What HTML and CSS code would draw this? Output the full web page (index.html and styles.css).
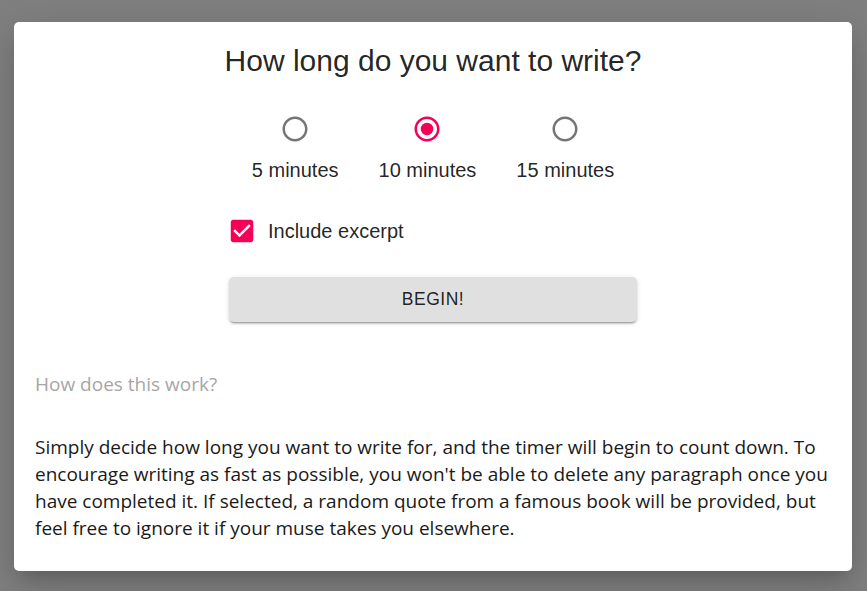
FILE: index.html
```html
<!DOCTYPE html>
<html>
<head>
<meta charset="utf-8">
<link rel="stylesheet" href="styles.css">
</head>
<body>
<div class="backdrop">
  <div class="dialog">
    <h2 class="title">How long do you want to write?</h2>
    <div class="radios">
      <label class="radio-item">
        <span class="radio-btn">
          <svg viewBox="0 0 24 24" width="30" height="30"><path fill="#757575" d="M12 2C6.48 2 2 6.48 2 12s4.48 10 10 10 10-4.48 10-10S17.52 2 12 2zm0 18c-4.42 0-8-3.58-8-8s3.58-8 8-8 8 3.58 8 8-3.58 8-8 8z"/></svg>
        </span>
        <span class="radio-label">5 minutes</span>
      </label>
      <label class="radio-item">
        <span class="radio-btn">
          <svg viewBox="0 0 24 24" width="30" height="30"><path fill="#f50057" d="M12 2C6.48 2 2 6.48 2 12s4.48 10 10 10 10-4.48 10-10S17.52 2 12 2zm0 18c-4.42 0-8-3.58-8-8s3.58-8 8-8 8 3.58 8 8-3.58 8-8 8z"/><circle cx="12" cy="12" r="5" fill="#f50057"/></svg>
        </span>
        <span class="radio-label">10 minutes</span>
      </label>
      <label class="radio-item">
        <span class="radio-btn">
          <svg viewBox="0 0 24 24" width="30" height="30"><path fill="#757575" d="M12 2C6.48 2 2 6.48 2 12s4.48 10 10 10 10-4.48 10-10S17.52 2 12 2zm0 18c-4.42 0-8-3.58-8-8s3.58-8 8-8 8 3.58 8 8-3.58 8-8 8z"/></svg>
        </span>
        <span class="radio-label">15 minutes</span>
      </label>
    </div>
    <div class="controls">
      <label class="check-row">
        <span class="check-btn">
          <svg viewBox="0 0 24 24" width="30" height="30"><path fill="#f50057" d="M19 3H5c-1.11 0-2 .9-2 2v14c0 1.1.89 2 2 2h14c1.11 0 2-.9 2-2V5c0-1.1-.89-2-2-2zm-9 14l-5-5 1.41-1.41L10 14.17l7.59-7.59L19 8l-9 9z"/></svg>
        </span>
        <span class="check-label">Include excerpt</span>
      </label>
      <button class="begin">BEGIN!</button>
    </div>
    <div class="info">
      <p class="info-head">How does this work?</p>
      <p class="info-text">Simply decide how long you want to write for, and the timer will begin to count down. To encourage writing as fast as possible, you won't be able to delete any paragraph once you have completed it. If selected, a random quote from a famous book will be provided, but feel free to ignore it if your muse takes you elsewhere.</p>
    </div>
  </div>
</div>
</body>
</html>
```

FILE: styles.css
```css
* { box-sizing: border-box; }
html, body { margin: 0; padding: 0; }
body {
  background: #7f7f7f;
  width: 867px;
  height: 591px;
  overflow: hidden;
}
.backdrop {
  padding: 22px 15px 20px 14px;
}
.dialog {
  background: #fff;
  border-radius: 5px;
  height: 549px;
  box-shadow: 0 14px 45px 3px rgba(0,0,0,0.14), 0 11px 18px -7px rgba(0,0,0,0.2);
  padding: 19px 0 0 0;
  display: flex;
  flex-direction: column;
}
.title {
  margin: 0;
  font-family: "Liberation Sans", Arial, sans-serif;
  font-weight: 400;
  font-size: 30px;
  line-height: 40px;
  text-align: center;
  color: rgba(0,0,0,0.87);
}
.radios {
  display: flex;
  justify-content: center;
  gap: 40px;
  margin-top: 22px;
}
.radio-item {
  display: flex;
  flex-direction: column;
  align-items: center;
}
.radio-btn {
  display: flex;
  padding: 11px;
}
.radio-btn svg { display: block; }
.radio-label, .check-label {
  font-family: "Liberation Sans", Arial, sans-serif;
  font-size: 20px;
  line-height: 30px;
  color: rgba(0,0,0,0.87);
}
.controls {
  width: 408px;
  margin: 20px auto 0;
  display: flex;
  flex-direction: column;
}
.check-row {
  display: flex;
  align-items: center;
  margin-left: -13px;
}
.check-btn {
  display: flex;
  padding: 11px;
}
.check-btn svg { display: block; }
.check-label { margin-left: 0; }
.begin {
  margin-top: 20px;
  height: 45px;
  border: 0;
  border-radius: 5px;
  background: #e0e0e0;
  font-family: "Liberation Sans", Arial, sans-serif;
  font-size: 17.5px;
  letter-spacing: 0.5px;
  color: rgba(0,0,0,0.87);
  box-shadow: 0 3px 1px -2px rgba(0,0,0,0.2), 0 2px 2px 0 rgba(0,0,0,0.14), 0 1px 5px 0 rgba(0,0,0,0.12);
}
.info {
  padding: 0 21px 0 21px;
  font-family: "Open Sans", "Noto Sans", sans-serif;
}
.info-head {
  margin: 49px 0 0 0;
  font-size: 19px;
  line-height: 27px;
  color: #a6a6a6;
}
.info-text {
  margin: 36px 0 0 0;
  font-size: 19px;
  line-height: 27px;
  color: #1a1a1a;
}
```
